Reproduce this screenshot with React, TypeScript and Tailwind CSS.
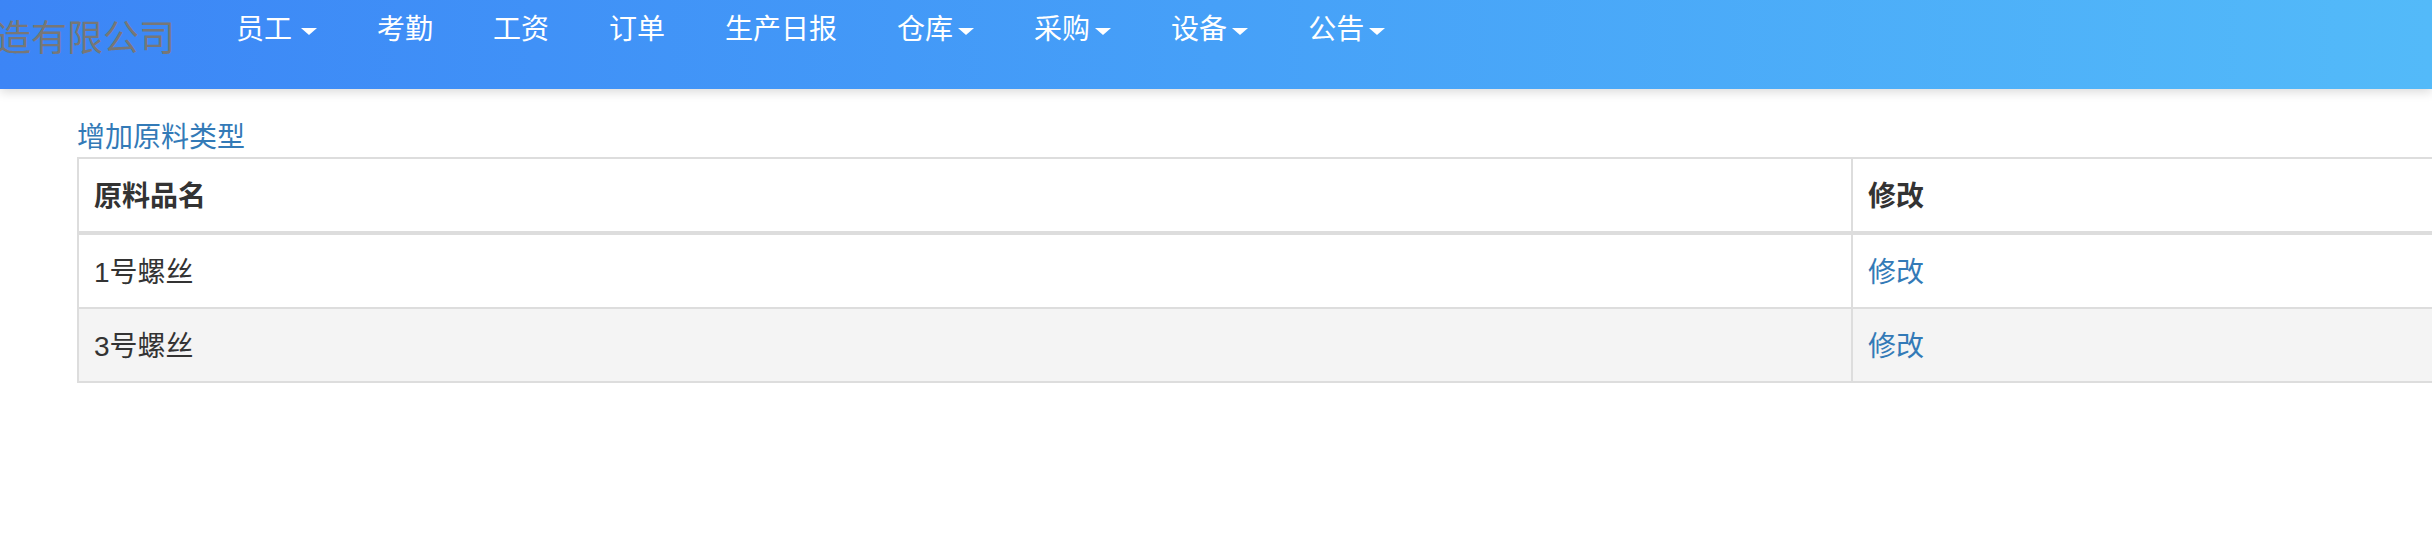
import React from "react";

const navItems = [
  { label: "员工", caret: true, spaced: true },
  { label: "考勤" },
  { label: "工资" },
  { label: "订单" },
  { label: "生产日报" },
  { label: "仓库", caret: true },
  { label: "采购", caret: true },
  { label: "设备", caret: true },
  { label: "公告", caret: true },
];

const rows = ["1号螺丝", "3号螺丝"];

const Caret = ({ spaced }: { spaced?: boolean }) => (
  <span
    className={
      "inline-block w-0 h-0 border-t-[7px] border-x-[8px] border-x-transparent border-t-white align-middle " +
      (spaced ? "ml-[9px]" : "ml-[5px]")
    }
  />
);

const App = () => {
  return (
    <div
      className="min-h-screen w-full overflow-hidden bg-white text-[#333]"
      style={{ fontFamily: '"Liberation Sans", "Noto Sans CJK SC", sans-serif' }}
    >
      {/* top bar */}
      <header className="relative z-10 flex items-start h-[89px] w-full bg-linear-to-r from-[#3c85f6] to-[#53baf9] shadow-[0_3px_10px_rgba(0,0,0,0.15)]">
        <div className="-ml-[5px] w-[211px] shrink-0 mt-[14px] text-[36px] leading-[50px] text-[#777] whitespace-nowrap">
          造有限公司
        </div>
        <ul className="flex">
          {navItems.map((item) => (
            <li
              key={item.label}
              className="px-[30px] pt-[10px] text-[28px] leading-[40px] text-white whitespace-nowrap cursor-pointer"
            >
              {item.label}
              {item.caret && <Caret spaced={item.spaced} />}
            </li>
          ))}
        </ul>
      </header>

      {/* content */}
      <div className="pl-[77px] pt-[28px]">
        <a className="block pt-[2px] pb-0 text-[28px] leading-[38px] text-[#337ab7] cursor-pointer">
          增加原料类型
        </a>
        <div className="w-[2400px] border-2 border-[#ddd] text-[28px] leading-[40px]">
          <div className="flex border-b-4 border-[#ddd] font-bold">
            <div className="w-[1774px] shrink-0 border-r-2 border-[#ddd] px-[15px] pt-[18px] pb-[14px]">
              原料品名
            </div>
            <div className="flex-1 px-[15px] pt-[18px] pb-[14px]">修改</div>
          </div>
          {rows.map((name, i) => (
            <div
              key={name}
              className={
                "flex " +
                (i % 2 === 1 ? "bg-[#f4f4f4] " : "bg-white ") +
                (i < rows.length - 1 ? "border-b-2 border-[#ddd]" : "")
              }
            >
              <div className="w-[1774px] shrink-0 border-r-2 border-[#ddd] px-[15px] pt-[18px] pb-[14px]">
                {name}
              </div>
              <div className="flex-1 px-[15px] pt-[18px] pb-[14px]">
                <a className="text-[#337ab7] cursor-pointer">修改</a>
              </div>
            </div>
          ))}
        </div>
      </div>
    </div>
  );
};

export default App;
